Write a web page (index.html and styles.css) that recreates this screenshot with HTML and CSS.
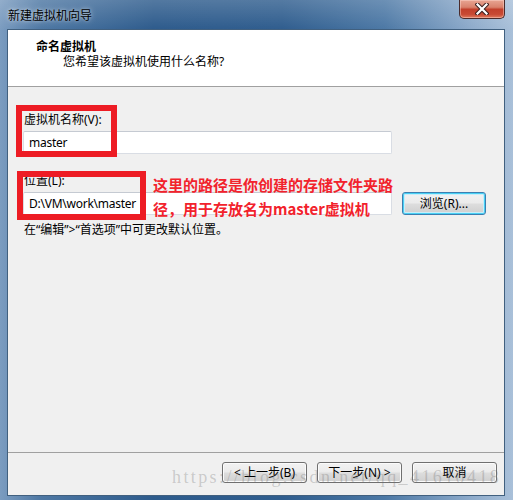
FILE: index.html
```html
<!DOCTYPE html>
<html lang="zh-CN">
<head>
<meta charset="utf-8">
<title>新建虚拟机向导</title>
<link rel="stylesheet" href="styles.css">
</head>
<body>
<div class="window">
  <div class="titlebar">
    <span class="title">新建虚拟机向导</span>
    <div class="close">
      <svg width="14" height="12" viewBox="0 0 14 12">
        <path d="M2.5 1.5 L11.5 10.5 M11.5 1.5 L2.5 10.5" stroke="#3b2020" stroke-width="4.2" stroke-linecap="square" fill="none"/>
        <path d="M2.5 1.5 L11.5 10.5 M11.5 1.5 L2.5 10.5" stroke="#ffffff" stroke-width="2.2" stroke-linecap="square" fill="none"/>
      </svg>
    </div>
  </div>
  <div class="client">
    <div class="header">
      <div class="h-title">命名虚拟机</div>
      <div class="h-sub">您希望该虚拟机使用什么名称?</div>
    </div>
    <div class="body">
      <div class="label">虚拟机名称(V):</div>
      <div class="input">master</div>
      <div class="label label-loc">位置(L):</div>
      <div class="row">
        <div class="input">D:\VM\work\master</div>
        <div class="btn btn-default">浏览(R)...</div>
      </div>
      <div class="hint">在“编辑”&gt;“首选项”中可更改默认位置。</div>

      <div class="mark mark-name"></div>
      <div class="mark mark-loc"></div>
      <div class="note">
        <div>这里的路径是你创建的存储文件夹路</div>
        <div>径，用于存放名为master虚拟机</div>
      </div>
    </div>
    <div class="footer">
      <div class="btn">&lt; 上一步(B)</div>
      <div class="btn">下一步(N) &gt;</div>
      <div class="btn">取消</div>
    </div>
    <div class="watermark">https://blog.csdn.net/qq_41610418</div>
  </div>
</div>
</body>
</html>
```

FILE: styles.css
```css
html, body {
  margin: 0;
  padding: 0;
}

body {
  font-family: "Noto Sans", "Noto Sans CJK SC", sans-serif;
  font-size: 12px;
  color: #000;
  background: #ffffff;
}

.window {
  width: 513px;
  height: 500px;
  box-sizing: border-box;
  display: flex;
  flex-direction: column;
  background:
    linear-gradient(to bottom, rgba(255,255,255,0.18), rgba(255,255,255,0) 30px),
    linear-gradient(to right, #7b9cc0 0%, #4d77a3 8%, #2d5b8c 30%, #2f5d8e 55%, #4c78a5 75%, #8eabcb 92%, #a9c0d9 100%);
}

.titlebar {
  height: 29px;
  flex: none;
  display: flex;
  align-items: center;
}

.title {
  padding-left: 8px;
  font-family: "Noto Sans CJK SC", sans-serif;
  font-size: 12px;
  line-height: 16px;
  color: #000;
  text-shadow: 0 0 6px rgba(255,255,255,0.55), 0 0 3px rgba(255,255,255,0.5);
}

.close {
  align-self: flex-start;
  margin-left: auto;
  margin-right: 8px;
  width: 46px;
  height: 19px;
  box-sizing: border-box;
  border: 1px solid #4a2b2b;
  border-top: none;
  border-radius: 0 0 5px 5px;
  background: linear-gradient(to bottom, #e8a593 0%, #d9826d 40%, #c2402c 52%, #c84a34 80%, #e07a5e 100%);
  box-shadow: inset 0 0 0 1px rgba(255,220,210,0.45);
  display: flex;
  align-items: center;
  justify-content: center;
}

.close svg {
  display: block;
}

.client {
  flex: 1;
  position: relative;
  margin: 0 8px 4px 7px;
  border: 1px solid #41607f;
  background: #f0f0f0;
  display: flex;
  flex-direction: column;
}

.header {
  flex: none;
  background: #ffffff;
  border-bottom: 1px solid #a0a0a0;
  padding-top: 8px;
  box-sizing: content-box;
  height: 48px;
}

.h-title {
  padding-left: 28px;
  font-family: "Noto Sans CJK SC", sans-serif;
  font-weight: bold;
  line-height: 16px;
}

.h-sub {
  padding-left: 55px;
  line-height: 16px;
}

.body {
  flex: 1;
  position: relative;
  padding: 25px 0 0 15px;
}

.label {
  margin-left: 1px;
  line-height: 16px;
}

.label-loc {
  margin-top: 19px;
}

.input {
  margin-top: 3px;
  width: 369px;
  height: 23px;
  box-sizing: border-box;
  background: #ffffff;
  border: 1px solid #d9dde4;
  border-top-color: #c5cad2;
  border-radius: 2px;
  padding-left: 5px;
  line-height: 21px;
  letter-spacing: -0.25px;
}

.row {
  margin-top: 3px;
  display: flex;
  align-items: center;
  gap: 10px;
}

.row .input {
  margin-top: 0;
}

.hint {
  margin-top: 7px;
  margin-left: 1px;
  line-height: 16px;
}

.btn {
  width: 85px;
  height: 21px;
  box-sizing: border-box;
  border: 1px solid #707070;
  border-radius: 3px;
  background: linear-gradient(to bottom, #f2f2f2 0%, #ebebeb 48%, #dddddd 52%, #cfcfcf 100%);
  box-shadow: inset 0 0 0 1px #fbfbfb;
  display: flex;
  align-items: center;
  justify-content: center;
  line-height: 16px;
  color: #000;
}

.btn-default {
  width: 84px;
  height: 23px;
  border-color: #3c7fb1;
  box-shadow: inset 0 0 0 1px #48d0f4, inset 0 0 0 2px #c8edfa;
}

.footer {
  flex: none;
  border-top: 1px solid #a0a0a0;
  box-sizing: content-box;
  display: flex;
  justify-content: flex-end;
  align-items: flex-start;
  gap: 10px;
  padding: 9px 7px 0 0;
  height: 33px;
}

.mark {
  position: absolute;
  box-sizing: border-box;
  border: 6px solid #ed1c24;
}

.mark-name {
  left: 8px;
  top: 18px;
  width: 101px;
  height: 52px;
}

.mark-loc {
  left: 9px;
  top: 84px;
  width: 129px;
  height: 49px;
}

.note {
  position: absolute;
  left: 145px;
  top: 86px;
  font-family: "Noto Sans CJK SC", sans-serif;
  font-weight: bold;
  font-size: 15px;
  line-height: 24px;
  color: #f2222c;
  white-space: nowrap;
}

.watermark {
  position: absolute;
  left: 164px;
  top: 437px;
  font-family: "Liberation Serif", serif;
  font-size: 18px;
  line-height: 20px;
  letter-spacing: 2.4px;
  color: rgba(110,110,110,0.3);
  white-space: nowrap;
  pointer-events: none;
}
```
